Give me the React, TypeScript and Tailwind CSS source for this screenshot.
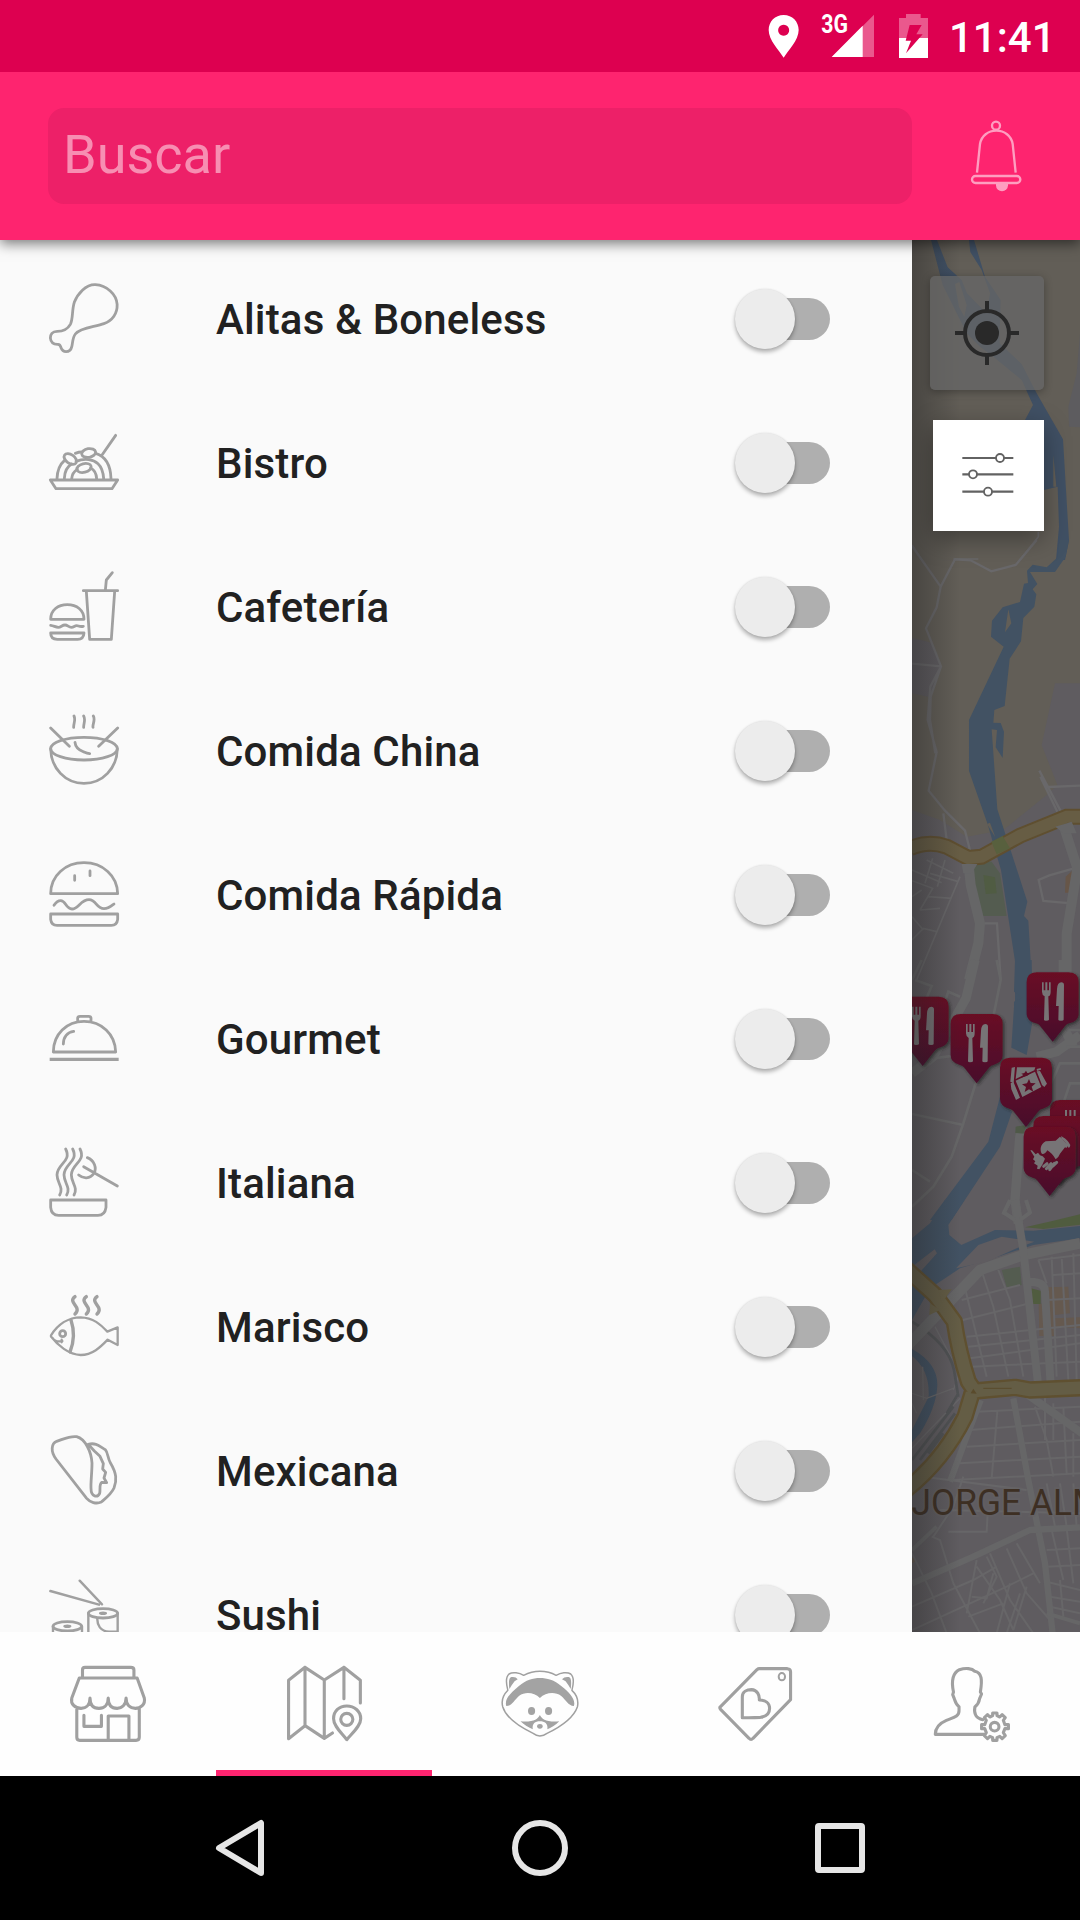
import type { ReactNode } from "react";

const ROBOTO = "font-['Roboto','Liberation_Sans',sans-serif]";

function Icon({ box, size, sw, children }: { box: string; size: number; sw: number; children: ReactNode }) {
  return (
    <svg
      width={size}
      height={size}
      viewBox={box}
      preserveAspectRatio="none"
      fill="none"
      stroke="#a0a0a0"
      strokeWidth={sw}
      strokeLinecap="round"
      strokeLinejoin="round"
      className="block shrink-0 [&_*]:[vector-effect:non-scaling-stroke]"
    >
      {children}
    </svg>
  );
}

const categories: { label: string; box: string; art: ReactNode }[] = [
  {
    label: "Alitas & Boneless",
    box: "134.4 666 201.6 216",
    art: (
      <path d="M267 674C240 673 217 702 208 727C201 750 205 777 197 793C189 808 177 814 160 814C146 814 141 824 141 834C142 846 150 853 161 853C168 852 169 856 170 861C173 870 178 875 185 875C193 875 199 869 201 860C204 847 203 833 211 822C225 803 267 801 291 791C315 782 329 760 328 733C326 703 299 676 267 674Z" />
    ),
  },
  {
    label: "Bistro",
    box: "54 48 216 216",
    art: (
      <>
        <path d="M61 210H263L246 236H78ZM81 206C82 180 90 163 103 152M136 130Q146 126 156 126M197 130C230 140 242 172 243 206M103 206C104 180 114 168 125 162M138 154C165 144 190 148 204 161C217 173 220 190 221 206M125 206C126 193 132 184 142 178M182 174C194 180 199 192 200 206M214 138L257 76" />
        <ellipse cx="121" cy="147" rx="21" ry="13" transform="rotate(35 121 147)" />
        <ellipse cx="176" cy="129" rx="21" ry="13" transform="rotate(-10 176 129)" />
        <ellipse cx="162" cy="174" rx="22" ry="13" transform="rotate(-14 162 174)" />
      </>
    ),
  },
  {
    label: "Cafetería",
    box: "54 480 216 216",
    art: (
      <path d="M62 628H162C162 600 140 584 112 584S62 600 62 628ZM62 646C72 647 76 652 85 652C93 652 96 645 105 645C113 645 116 652 124 652C132 652 133 647 140 647C146 647 147 651 160 649M62 669H162Q161 688 143 688H82Q62 688 62 669ZM160 542H263M169 544L179 688H244L254 544M226 541L229 510L247 488" />
    ),
  },
  {
    label: "Comida China",
    box: "54 912 216 216",
    art: (
      <>
        <ellipse cx="162" cy="1016" rx="100" ry="34" />
        <path d="M62 1016C63 1075 106 1120 162 1120S261 1075 262 1016M62 954L118 1009M263 954L206 1009M135 997C137 1020 158 1023 164 1027Q171 1030 179 1031M132 918C138 930 130 942 131 952M161 918C168 930 160 942 161 952M190 918C197 930 187 942 189 952" />
      </>
    ),
  },
  {
    label: "Comida Rápida",
    box: "54 54 216 216",
    art: (
      <path d="M62 161H263C262 107 218 68 162 68S62 107 62 161ZM134 107V121M180 93V107M72 196C80 184 86 182 92 182C108 182 107 207 126 207C146 207 152 179 177 179C199 179 199 206 222 206C235 206 243 199 252 192M62 222H263V238Q261 256 244 256H81Q64 256 62 238Z" />
    ),
  },
  {
    label: "Gourmet",
    box: "54 486 216 216",
    art: (
      <>
        <path d="M70 636H257C256 582 214 544 162 544S70 582 70 636ZM143 544V535Q143 529 150 529H176Q183 529 183 535V544M100 612C100 591 112 576 131 574" />
        <path d="M59 658H266" strokeWidth="3.2" strokeLinecap="butt" />
      </>
    ),
  },
  {
    label: "Italiana",
    box: "54 918 216 216",
    art: (
      <path d="M107 927C126 965 82 970 81 1004C81 1030 102 1041 89 1065M128 927C147 965 103 970 102 1004C102 1030 123 1041 110 1065M150 927C169 965 125 970 124 1004C124 1030 145 1041 132 1065M172 953C193 961 201 984 192 1000C180 1018 159 1016 146 1005M161 980L262 1038M62 1080H228V1102Q225 1126 204 1126H86Q64 1126 62 1102Z" />
    ),
  },
  {
    label: "Marisco",
    box: "54 60 216 216",
    art: (
      <>
        <path strokeWidth="2.3" d="M63 196C83 164 115 142 152 142C190 143 211 163 232 185L263 172V225L233 209C211 232 187 255 152 255C117 254 82 225 63 200ZM66 202C75 217 86 214 97 213M95 217V209" />
        <path d="M123 150C133 180 132 216 120 246M135 80C111 98 158 110 135 132M169 80C145 98 192 110 169 132M201 80C177 98 224 110 201 132" strokeWidth="3.4" />
        <circle cx="98" cy="191" r="9" />
      </>
    ),
  },
  {
    label: "Mexicana",
    box: "54 492 216 216",
    art: (
      <path d="M80 514C106 505 121 497 140 500C166 507 184 545 186 579C186 609 182 635 183 655C183 682 203 683 209 670C212 660 206 642 216 637L230 638L222 624L227 607L218 597L220 581L210 559L193 543L175 523C198 516 211 531 226 539C234 548 233 565 241 578C260 610 261 630 252 654C244 672 228 684 214 696C199 703 180 697 170 685L78 567C61 543 64 521 80 514Z" />
    ),
  },
  {
    label: "Sushi",
    box: "54 924 216 216",
    art: (
      <>
        <path strokeWidth="2.4" d="M61 963L207 1004M149 932L216 1003M175 1030V1090M263 1030V1085H237C211 1084 201 1065 202 1045M69 1069V1110M156 1069V1110" />
        <ellipse cx="219" cy="1030" rx="44" ry="14" />
        <ellipse cx="219" cy="1030" rx="8" ry="1" />
        <ellipse cx="112" cy="1069" rx="43" ry="14" />
        <ellipse cx="112" cy="1069" rx="8" ry="1" />
      </>
    ),
  },
];

const tabs: { name: string; box: string; active?: boolean; art: ReactNode }[] = [
  {
    name: "store",
    box: "184.8 126 235.2 252",
    art: (
      <path d="M231 174V150Q231 142 238 142H366Q375 142 375 150V174M222 174H384L404 234C408 254 393 265 379 265C364 265 353 255 353 234C353 255 341 265 328 265C313 265 303 255 303 234C303 255 291 265 277 265C262 265 252 255 252 234C252 255 241 265 227 265C210 265 197 252 201 234ZM215 264V352Q215 361 223 361H381Q390 361 390 352V264M235 286V319H284V286M303 360V288H361V360" />
    ),
  },
  {
    name: "map",
    box: "789.6 126 235.2 252",
    active: true,
    art: (
      <>
        <path d="M931 339L908 355L854 317L808 356V181L854 142L908 180L963 142L1009 181V249M854 142V317M908 180V355M963 142V236M971 359C953 335 934 317 934 296C934 273 950 258 971 258S1010 273 1010 296C1010 317 990 335 971 359Z" />
        <ellipse cx="971" cy="298" rx="17" ry="18" />
      </>
    ),
  },
  {
    name: "raccoon",
    box: "96.1 126 212.4 252",
    art: (
      <>
        <path
          strokeWidth="1.5"
          d="M202 154C184 154 171 160 161 166C150 158 133 155 124 162C115 171 117 193 121 211C111 223 104 242 108 260C116 291 144 317 185 340Q193 347 202 348Q212 347 220 340C260 317 288 291 297 260C300 242 294 223 283 211C287 193 289 171 280 162C271 155 255 158 243 166C234 160 220 154 202 154Z"
        />
        <g fill="#a3a3a3" stroke="none">
          <path d="M125 207C123 191 123 172 130 171Q141 169 146 178L138 184Q132 193 125 207ZM280 207C282 191 282 172 275 171Q264 169 258 178L267 184Q273 193 280 207Z" />
          <path d="M117 258C112 239 126 220 149 198C167 180 184 174 202 174S239 180 256 198C279 220 293 239 288 258C273 257 268 240 256 228C238 213 216 219 202 234C188 219 167 213 149 228C137 240 133 257 117 258Z" />
          <ellipse cx="181" cy="273" rx="9" ry="12" />
          <ellipse cx="224" cy="273" rx="9" ry="12" />
          <path d="M202 285C207 298 219 307 251 304C242 316 229 324 221 328C223 311 214 304 202 304S182 311 184 328C174 323 162 315 153 304C185 307 197 298 202 285Z" />
          <ellipse cx="202" cy="319" rx="7" ry="7" />
        </g>
      </>
    ),
  },
  {
    name: "offers",
    box: "642.4 126 212.4 252",
    art: (
      <>
        <path d="M757 146H828Q836 147 836 155V239L741 355Q736 362 731 355L659 268Q655 263 659 260L751 149Q754 146 757 146Z" />
        <ellipse cx="814" cy="170" rx="8" ry="11" strokeWidth="2" />
        <path d="M714 293V230C714 215 726 209 737 209C752 210 758 225 757 240C772 240 783 249 783 265C783 281 774 290 760 292Q738 294 714 293Z" />
      </>
    ),
  },
  {
    name: "profile",
    box: "1188.6 126 212.4 252",
    art: (
      <>
        <path d="M1326 343H1202C1202 326 1210 311 1230 301C1247 293 1263 290 1262 271V260C1254 253 1252 243 1250 236L1246 224L1248 216C1242 183 1245 160 1263 149C1279 143 1295 145 1302 154C1320 158 1321 180 1316 216L1319 222L1314 236Q1312 251 1302 261C1299 282 1304 294 1322 299" />
        <path d="M1347 287V279H1358V287L1365 291L1371 284L1379 293L1374 301L1378 314H1387V326H1378L1374 338L1379 347L1371 356L1365 349L1358 353V361H1347V353L1340 349L1334 356L1326 347L1331 338L1327 326H1319V314H1327L1331 301L1326 293L1334 284L1340 291Z" />
        <ellipse cx="1352" cy="320" rx="11" ry="13" />
      </>
    ),
  },
];

function Toggle() {
  return (
    <div className="relative flex h-[42px] w-[96px] items-center">
      <div className="ml-4 h-[42px] w-20 rounded-full bg-[#afafaf]" />
      <div className="absolute -top-[9px] left-[1px] size-[60px] rounded-full bg-[#ececec] shadow-[0_3px_4px_rgba(0,0,0,0.3),0_0_2px_rgba(0,0,0,0.1)]" />
    </div>
  );
}

function Pin({ x, y, children }: { x: number; y: number; children?: ReactNode }) {
  return (
    <g transform={`translate(${x} ${y})`}>
      <path
        d="M-48-208H48Q78-208 78-178V-84Q78-62 50-55Q43-54 38-48L0 0L-38-48Q-43-54-50-55Q-78-62-78-84V-178Q-78-208-48-208Z"
        fill="url(#pin)"
        filter="url(#pinShadow)"
      />
      <g fill="#777476">{children}</g>
    </g>
  );
}

const cutlery = (
  <path d="M-32-178H-27V-154H-22V-178H-16V-154H-11V-178H-6V-150Q-6-138-13-136L-11-66Q-12-63-20-63Q-26-63-26-66L-24-136Q-32-140-32-150ZM33-66Q33-63 25-63Q17-63 17-66L18-107H10L13-158Q14-177 26-178Q34-178 34-170Z" />
);

function CityMap() {
  return (
    <svg className="absolute inset-0 block" width="168" height="1392" viewBox="912 240 168 1392">
      <defs>
        <linearGradient id="pin" x1="0" y1="0" x2="0" y2="1">
          <stop offset="0" stopColor="#6a1024" />
          <stop offset="1" stopColor="#480a2d" />
        </linearGradient>
        <filter id="pinShadow" x="-20%" y="-20%" width="150%" height="150%">
          <feDropShadow dx="5" dy="5" stdDeviation="4" floodColor="#222" floodOpacity="0.7" />
        </filter>
        <linearGradient id="edge" x1="0" y1="0" x2="1" y2="0">
          <stop offset="0" stopColor="#222" stopOpacity="0.4" />
          <stop offset="1" stopColor="#222" stopOpacity="0" />
        </linearGradient>
      </defs>
      <rect x="912" y="240" width="168" height="1392" fill="#625e57" />

      {/* Northern riverbanks */}
      <g transform="translate(700 230) scale(.33333)">
        <path d="M1140 310L1130 430L1105 530L1107 590L1140 592Z" fill="#5d5c5f" />
        <g fill="#405064">
          <path d="M693 30H711L743 112L785 150L801 190L850 240L898 270L899 340L965 402L1010 490L1089 628L1107 930L1095 990H1068L1077 890L1073 770L1032 780L975 570L999 525L965 450L880 380L840 350L800 310L728 165Z" />
          <path d="M807 30H822L855 140L902 210L900 290L860 250L870 190L845 120L811 66Z" />
        </g>
        <path d="M765 162L778 156L800 225L793 260L777 230ZM1060 675L1069 770L1060 770Z" fill="#625e57" />
        <path d="M636 945L665 990M1015 905V920L960 990M760 987H835" stroke="#69686a" strokeWidth="5" fill="none" />
      </g>

      {/* Central river, highway and suburbs */}
      <g transform="translate(900 540) scale(.33333)">
        <path d="M36 810L120 840L200 890L310 870L440 765L472 735L425 615L465 430H540V3300H36ZM36 293L95 308L125 380L90 472L36 460Z" fill="#5f5c60" />
        <path d="M215 990L240 962L275 965L300 1000L320 1128H246Z" fill="#545c50" />
        <path d="M250 1005L285 1012L290 1060L257 1062Z" fill="#505c43" />
        <path d="M497 1010L525 985L515 1058H495Z" fill="#675648" />
        <path d="M478 0H507L497 50L465 96H390L412 132L398 148L409 163L403 200L370 234L363 304L329 356L314 498L283 510L280 548L302 549L312 575L308 654L287 622L291 570L275 568L292 808L382 1085L372 1128L385 1142L400 1400H345L346 1270L303 990L262 850L207 693V540L311 320L273 290L276 242L308 202L360 186L372 131L384 129L381 92L398 74L440 82L473 52Z" fill="#425263" />
        <path d="M325 208L334 250L315 277ZM261 852L270 848L286 892Z" fill="#625e57" />
        <g fill="none" stroke="#69686a" strokeWidth="7">
          <path d="M36 18L122 140M410 0L347 75L274 94L212 61L165 58L122 140L110 202L78 265L123 379L91 440L83 540L110 636L86 752L135 812L195 872L211 935M123 379L92 470L90 540L106 640M36 371L123 379M130 820L140 900M418 692L483 815M421 710L472 815M446 741L540 737M522 985L448 1006L416 1020L430 1083L515 1090M246 1150H291L302 1320" />
          <path d="M98 955L75 1030M135 960L112 1040M36 990L125 1028M36 1022L98 1045L60 1110M80 960L160 1000M90 1000L175 1025M85 1070L155 1075M60 1110L120 1105M36 1200L70 1165L110 1175M36 1130L70 1170M36 1070L65 1050M180 1010L50 1320" strokeWidth="5" />
        </g>
        <path d="M205 965L212 1035L240 1150L235 1210L207 1320M490 855L532 985L500 1180V1300" fill="none" stroke="#666667" strokeWidth="30" />
        <path d="M30 925Q85 900 140 920L205 954L245 950L360 887L500 830H545" fill="none" stroke="#5f4f30" strokeWidth="48" />
        <path d="M30 925Q85 900 140 920L205 954L245 950L360 887L500 830H545" fill="none" stroke="#675d44" strokeWidth="36" />
        <path d="M274 905L308 888L330 925L290 943Z" fill="#58603e" />
        <path d="M185 972H232L215 1000H190ZM466 860L515 845L530 880L490 880Z" fill="#666667" />
      </g>

      {/* River bend */}
      <g transform="translate(900 960) scale(.33333)">
        <path d="M345 0H395L398 180L380 285L334 263L342 140V125L368 113L342 95ZM300 410L336 455L300 560L155 780H90L265 545Z" fill="#425263" />
        <path d="M347 500L380 495L362 542L345 530Z" fill="#4f5948" />
        <g fill="none" stroke="#666667">
          <path d="M225 0L198 115L150 200L100 290L36 340" strokeWidth="28" />
          <path d="M360 520L345 720L355 790M540 225L470 275L410 290M490 0V200L520 260" strokeWidth="28" />
          <path d="M100 295L200 282M230 360L190 490L155 590L100 680L36 740M36 462L190 495M36 630L90 665M540 310H480L440 400M550 370H510L490 430M290 0L302 60L280 170M65 0L36 60M45 60L95 78L75 125M130 140L145 95L180 110M36 130L60 160M335 720L310 760L360 780M500 210H540M500 260H540" strokeWidth="8" />
        </g>
      </g>

      {/* Downtown */}
      <g transform="translate(900 1200) scale(.33333)">
        <path d="M135 0H193L145 75L148 105L184 135L285 90L400 92L540 78V115L400 135L300 168L180 205L90 265L36 360V115L90 70ZM36 447Q113 490 112 555Q110 620 60 700L36 727V690L86 590Q90 510 36 468Z" fill="#425263" />
        <path d="M168 205L235 135L305 110L403 125L350 145L260 185ZM36 200L104 148L111 160L57 220L36 235Z" fill="#5f5c60" />
        <path d="M375 82L460 62L540 43V74L430 87Z" fill="#505c3f" />
        <path d="M305 210L360 200L365 255L320 262Z" fill="#545c50" />
        <path d="M392 265L422 272V312H398Z" fill="#505c3f" />
        <path d="M443 262L505 260L510 340L465 345V355L540 352V385L465 380V408H418L416 312L445 310Z" fill="#65594f" />
        <path d="M36 1075L45 1070V1085L36 1090Z" fill="#65594f" />
        <g fill="none" stroke="#676668" strokeWidth="6">
          <path d="M248 222L280 320L325 530M295 210L330 300L370 530M195 265L260 530M185 300L360 255M180 362L380 312M200 410L540 375M205 440L540 405M210 475L540 430M215 500L540 485M415 180L440 250M455 170L470 530M485 170L505 540M415 180L540 165M520 160L530 540M460 225L540 220M440 300L540 295" />
          <path d="M230 635L540 620M210 690L540 665M200 740L540 720M180 790L540 770M160 840L540 820M292 635L275 835M405 620L440 720L460 830M460 610V720M490 620L500 820M435 590V720M520 700V830M70 830L380 870M120 930L540 940M145 995H260L263 940M440 850L465 980M480 850L500 980M520 850L530 980" />
          <path d="M95 1010L120 1020L160 1150L240 1300M36 1060L95 1180L140 1300M100 1010L160 920L190 830M36 1220L220 1140L290 1100M36 1290L320 1160L400 1120M230 1080L200 1240M270 1060L330 1200L400 1300M320 1045L380 1180L450 1260M350 1030L420 1150M215 1190L260 1195L280 1120M205 1250L310 1210M330 1150L290 1300M360 1180L320 1300M260 1070L290 1130L250 1210M380 1160L340 1290M230 1100L300 1200L340 1290M455 990L490 1140M500 985L520 1150M440 1050L540 1045M440 1100L540 1095M440 1145L540 1170M450 1190L540 1205M450 1220L540 1240M480 1140L490 1250" />
          <path d="M105 380L155 475M36 580L80 595L160 565M68 500L70 600M36 610L50 640M180 595L36 745M190 490L160 570" strokeWidth="4" />
        </g>
        <g fill="none" stroke="#505254" strokeWidth="8">
          <path d="M36 365Q145 430 162 510L175 590M160 620L36 780M165 640L60 780M175 580L140 640M130 700L85 760" />
        </g>
        <g fill="none" stroke="#666667" strokeLinejoin="round">
          <path d="M20 440L240 210L370 165L540 130" strokeWidth="32" />
          <path d="M345 0L370 150L415 560M390 245Q435 245 435 275L452 555" strokeWidth="24" />
          <path d="M340 595L385 840L435 1090L460 1320" strokeWidth="19" />
          <path d="M36 1150L220 1070L390 990L540 982M242 600L200 710L150 845" strokeWidth="19" />
          <path d="M385 585L560 710" strokeWidth="24" />
          <path d="M440 1240L540 1270M330 0L312 38L345 60M378 0L390 38L360 60M36 1050L110 980" strokeWidth="12" />
        </g>
        <path d="M20 208L105 285L163 365Q175 450 205 545L224 573L345 562L390 570L545 563M216 580L195 650Q130 780 20 868" fill="none" stroke="#5f5030" strokeWidth="52" strokeLinejoin="round" />
        <path d="M20 208L105 285L163 365Q175 450 205 545L224 573L345 562L390 570L545 563M216 580L195 650Q130 780 20 868" fill="none" stroke="#645d45" strokeWidth="38" strokeLinejoin="round" />
        <path d="M115 270L155 268L125 310ZM90 310L120 330L88 345Z" fill="#645d45" />
        <path d="M212 580L220 566L230 581Z" fill="#5a4b2c" />
        <path d="M250 565H335" stroke="#5a4b2c" strokeWidth="3" />
      </g>

      <g transform="translate(900 960) scale(.33333)">
        <Pin x={68} y={318}>{cutlery}</Pin>
        <Pin x={230} y={370}>{cutlery}</Pin>
        <Pin x={458} y={245}>{cutlery}</Pin>
        <Pin x={528} y={628}>
          <path d="M-33-178h6v20h-6zM-20-178h6v20h-6zM-7-178h6v20h-6zM-2-80L10-92V-65Z" />
        </Pin>
        <Pin x={378} y={501}>
          <path d="M-43-178L-33-180L-37-132L-47-136ZM-27-179H28L25-170L-31-144ZM32-174L44-177L45-172L33-168Z" />
          <path d="M-46-131L-38-136L-18-88L-30-81L-44-113ZM-31-139L27-166L46-120L-11-90ZM32-167L42-168L63-130L55-120L48-126Z" />
          <path d="M9-144L14-132L29-131L17-121L22-106L9-113L-4-105L0-120L-12-128L3-131ZM0-169L4-162L14-162L4-154L-16-148L-8-156L-14-160L-5-162Z" fill="#5b0e27" />
        </Pin>
        <Pin x={478} y={676} />
        <Pin x={449} y={708}>
          <path d="M-58-137L-53-137L-42-125L-35-130L-29-122L-21-119L-14-112L-22-94L-31-80L-38-82L-36-91L-47-98L-43-104L-50-110L-46-118Z" />
          <path d="M-27-144Q-24-158-12-164L18-166L31-178L53-155L31-127Q27-116 18-110Q8-128-7-137Q-15-124-22-126Q-28-130-27-144Z" />
          <path d="M-18-89L-8-97M-10-82L4-97M0-79L14-98M10-90L21-101" fill="none" stroke="#777476" strokeWidth="9" strokeLinecap="round" />
          <path d="M35-180L40-176Q53-170 62-153Q61-146 57-144Q49-163 35-172Z" />
          <path d="M52-160L57-152L50-144L44-148Z" />
        </Pin>
      </g>

      <g transform="translate(911.5 1514.5) scale(.955 1)">
        <text
          x="0"
          y="0"
          className="font-['Roboto',sans-serif] text-[37px]"
          fill="#3d2f23"
          stroke="#646162"
          strokeWidth="4"
          strokeOpacity=".5"
          paintOrder="stroke"
        >
          JORGE ALMADA
        </text>
      </g>
      <rect x="912" y="240" width="48" height="1392" fill="url(#edge)" />
    </svg>
  );
}

function StatusBar() {
  return (
    <div className="relative z-20 flex h-[72px] items-start bg-[#dd0050] pl-[768px] pt-[14px] text-white">
      <svg width="31" height="44" viewBox="84 42 93 132" fill="#fff">
        <path fillRule="evenodd" d="M131 45C105 45 86 65 86 90C86 121 118 152 131 173C144 152 176 121 176 90C176 65 157 45 131 45ZM131 74A16.500 16.500 0 1 1 130.900 74Z" />
      </svg>
      <svg className="ml-[22px] overflow-visible" width="54" height="44" viewBox="243 42 162 132">
        <path d="M402 44V171H275Z" fill="#ea588d" />
        <path d="M368 77V171H275Z" fill="#fff" />
        <g transform="translate(244 100) scale(.84 1)">
          <text x="0" y="0" fill="#fff" className="font-['Roboto',sans-serif] text-[76px] font-bold">
            3G
          </text>
        </g>
      </svg>
      <svg className="ml-[24px]" width="29" height="44" viewBox="477 42 87 132">
        <path d="M477 54H498V42H542V54H564V114H477Z" fill="#ea588d" />
        <path d="M477 114H564V174H477Z" fill="#fff" />
        <path d="M509 75H545L529 103H548L498 160L513 122H497Z" fill="#dd0050" />
      </svg>
      <span className="ml-[21px] mt-[-1px] text-[42px] font-medium leading-[49px]">11:41</span>
    </div>
  );
}

export default function App() {
  return (
    <div className={`flex h-[1920px] w-[1080px] flex-col overflow-hidden bg-[#fafafa] ${ROBOTO}`}>
      <StatusBar />
      <header className="relative z-10 flex h-[168px] items-center bg-[#fe246f] pl-12 shadow-[0_4px_12px_rgba(0,0,0,0.5)]">
        <div className="flex h-24 w-[864px] items-center rounded-[16px] bg-[#ed2068] pb-[3px] pl-[15px] text-[54px] text-[#f78eb2]">
          Buscar
        </div>
        <svg className="ml-[58px] mt-[2px]" width="52" height="74" viewBox="690 360 156 222" fill="none" stroke="#fe9ec0" strokeWidth="7">
          <circle cx="768" cy="377" r="12" />
          <path d="M711 518L720 432C724 407 745 392 769 392S814 407 818 432L827 518" />
          <rect x="696" y="528" width="145" height="21" rx="10.500" />
          <path d="M768 548H804V556A18 18 0 0 1 768 556Z" fill="#fe9ec0" stroke="none" />
        </svg>
      </header>

      <main className="flex h-[1392px] shrink-0 overflow-hidden">
        <ul className="w-[912px] bg-[#fafafa] pt-[6px]">
          {categories.map((c) => (
            <li key={c.label} className="flex h-36 items-center pl-12 pr-[82px]">
              <Icon box={c.box} size={72} sw={2.8}>
                {c.art}
              </Icon>
              <span className="ml-24 flex-1 pt-[4px] text-[42px] font-medium leading-[50px] tracking-[0.15px] text-[#212121]">
                {c.label}
              </span>
              <div className="pt-[2px]">
                <Toggle />
              </div>
            </li>
          ))}
        </ul>
        <aside className="relative w-[168px] overflow-hidden">
          <CityMap />
          <div className="relative flex flex-col items-end pr-9 pt-9">
            <div className="flex size-[114px] items-center justify-center rounded-[5px] bg-[#676767]/75 shadow-[0_2px_8px_rgba(0,0,0,0.3)]">
              <svg width="64" height="64" viewBox="0 0 64 64" fill="none" stroke="#292929" strokeWidth="4">
                <circle cx="32" cy="32" r="22" />
                <circle cx="32" cy="32" r="12" fill="#292929" stroke="none" />
                <path d="M32 0V9M32 55V64M0 32H9M55 32H64" />
              </svg>
            </div>
            <div className="mt-[30px] flex size-[111px] items-center justify-center bg-white pb-[2px] pr-[2px] shadow-[0_8px_24px_rgba(0,0,0,0.35)]">
              <svg width="52" height="48" viewBox="787 664 156 144" fill="#fff" stroke="#626262" strokeWidth="5.500">
                <path d="M788 685H941M788 734H941M788 786H941" strokeWidth="6.500" />
                <circle cx="901" cy="685" r="12" />
                <circle cx="820" cy="734" r="12" />
                <circle cx="865" cy="786" r="12" />
              </svg>
            </div>
          </div>
        </aside>
      </main>

      <nav className="grid h-36 shrink-0 grid-cols-5 bg-[#fefefe]">
        {tabs.map((t) => (
          <div
            key={t.name}
            className={
              t.active
                ? "flex items-center justify-center shadow-[inset_0_-6px_0_#fe246f]"
                : "flex items-center justify-center"
            }
          >
            <Icon box={t.box} size={84} sw={3.1}>
              {t.art}
            </Icon>
          </div>
        ))}
      </nav>

      <footer className="flex h-36 shrink-0 items-center justify-between bg-black pl-[215px] pr-[215px]">
        <svg width="50" height="58" viewBox="215 1819 50 58" fill="none" stroke="#e6e6e6" strokeWidth="6" strokeLinejoin="round">
          <path d="M219 1848L261 1823V1873Z" />
        </svg>
        <div className="size-14 rounded-full border-[6px] border-[#e6e6e6]" />
        <div className="size-[50px] rounded-[4px] border-[6px] border-[#e6e6e6]" />
      </footer>
    </div>
  );
}
